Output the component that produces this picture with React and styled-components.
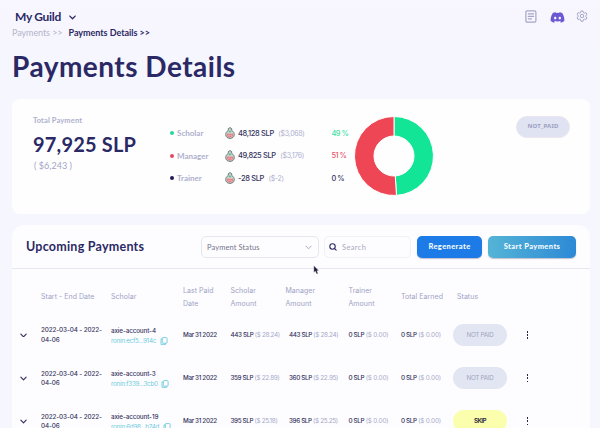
import React from 'react';
import styled, { createGlobalStyle } from 'styled-components';
import { FaDiscord } from 'react-icons/fa';

const GlobalStyle = createGlobalStyle`
  * { box-sizing: border-box; }
  body { margin: 0; background: #f6f6fe; overflow: hidden; }
`;

const navy = '#2b2965';
const ink = '#35335c';
const muted = '#aeb0cd';
const teal = '#6fcbdc';

const Page = styled.main`
  position: relative;
  height: 428px;
  overflow: hidden;
  padding: 0 10px 0 12px;
  background: linear-gradient(#f8f6fe, #f5f6fe 90px);
  color: ${navy};
  font-family: Lato, sans-serif;
  white-space: nowrap;
`;
const TopBar = styled.header`
  display: flex;
  justify-content: space-between;
  align-items: flex-start;
  height: 26px;
`;
const GuildPicker = styled.div`
  display: flex;
  align-items: center;
  gap: 8px;
  padding: 9px 0 0 3px;
  font-size: 12px;
  font-weight: 700;
  line-height: 16px;
  letter-spacing: -0.3px;
  svg { margin-top: 1px; }
`;
const Tools = styled.nav`
  display: flex;
  align-items: center;
  padding: 8px 2px 0 0;
  color: #a3a6c8;
  svg { display: block; }
  svg:nth-child(2) { margin: 2px 11px 0 13px; color: #6b59d3; }
  svg:nth-child(3) { margin-top: -2px; }
`;
const Breadcrumb = styled.div`
  display: flex;
  gap: 6px;
  height: 12px;
  font-size: 9px;
  line-height: 13px;
  letter-spacing: -0.07px;
  color: #b3b4cb;
  b { color: ${navy}; letter-spacing: -0.03px; }
`;
const Title = styled.h1`
  margin: 8px 0 0;
  height: 53px;
  font-size: 28px;
  line-height: 40px;
  letter-spacing: 0.48px;
  font-weight: 700;
`;
const SummaryCard = styled.section`
  display: flex;
  height: 115px;
  padding: 0 20px 0 21px;
  border-radius: 8px;
  background: #fefeff;
`;
const Total = styled.div`
  width: 136px;
  padding-top: 17px;
`;
const TotalLabel = styled.div`
  font-size: 7.5px;
  font-weight: 700;
  line-height: 10px;
  letter-spacing: 0.12px;
  color: ${muted};
`;
const TotalValue = styled.div`
  margin-top: 6px;
  font-size: 20px;
  font-weight: 700;
  line-height: 24px;
  letter-spacing: 0.19px;
`;
const TotalUsd = styled.div`
  margin-top: 4px;
  padding-left: 1px;
  font-size: 9px;
  line-height: 12px;
  letter-spacing: 0.05px;
  color: #a2a5c6;
`;
const Shares = styled.div`
  width: 185px;
  padding-top: 23px;
`;
const Share = styled.div`
  display: grid;
  grid-template-columns: 8px 47.5px 13.5px 93.5px auto;
  align-items: center;
  height: 22.5px;
`;
const Dot = styled.i`
  width: 4px;
  height: 4px;
  margin-left: 1px;
  border-radius: 50%;
  background: ${(p) => p.$color};
`;
const ShareName = styled.span`
  font-size: 8px;
  font-weight: 700;
  color: ${muted};
`;
const ShareAmount = styled.span`
  font: 500 7.5px Inter, sans-serif;
  letter-spacing: -0.36px;
  color: ${ink};
  small {
    margin-left: 2.8px;
    font-size: 7px;
    font-weight: 400;
    letter-spacing: -0.3px;
    color: ${muted};
  }
`;
const SharePercent = styled.span`
  font: 500 7.4px Inter, sans-serif;
  letter-spacing: -0.5px;
  color: ${(p) => p.$color};
`;
const Chart = styled.div`
  flex: 1;
  padding-top: 17px;
  svg { display: block; }
`;
const PaidBadge = styled.div`
  width: 54px;
  height: 22px;
  margin-top: 16.5px;
  border: 1px solid #eae5ef;
  border-radius: 11px;
  background: #e0e3f1;
  color: #9ca0c3;
  text-align: center;
  font: 700 6px/19px 'Noto Sans', sans-serif;
  letter-spacing: 0.16px;
`;
const PaymentsCard = styled.section`
  height: 230px;
  margin-top: 11px;
  border-radius: 12px 12px 0 0;
  background: #fdfdff;
`;
const Toolbar = styled.div`
  display: flex;
  height: 44px;
  padding: 11px 14px 0;
  border-bottom: 1px solid #e7e7f0;
`;
const Heading = styled.h2`
  width: 175px;
  margin: 0;
  font-size: 12.5px;
  line-height: 21px;
  letter-spacing: 0.24px;
`;
const Field = styled.div`
  display: flex;
  align-items: center;
  justify-content: space-between;
  width: 118px;
  height: 22px;
  padding: 0 6px 0 5px;
  border: 1px solid #e6e6ee;
  border-radius: 5px;
  color: #74748b;
  font-size: 7.5px;
  letter-spacing: 0.1px;
`;
const SearchField = styled(Field)`
  justify-content: flex-start;
  gap: 5px;
  width: 87px;
  margin-left: 5px;
  padding: 0 4px;
  border-color: #f0f0f5;
  color: #aaaabd;
  letter-spacing: 0.38px;
`;
const Button = styled.button`
  width: ${(p) => p.$width}px;
  height: 22px;
  margin: 0 0 0 6px;
  padding: 0 0 1px;
  border: 0;
  border-radius: 5px;
  background: ${(p) => p.$fill};
  box-shadow: 0 1px 1px #887fa080;
  color: #f5fbff;
  font: 900 7.5px/21px Lato, sans-serif;
  letter-spacing: 0.4px;
`;
const Row = styled.div`
  display: grid;
  grid-template-columns: 21px 70px 72px 47.5px 58.5px 59.5px 52.5px 52px 1fr;
  align-items: center;
  height: 43.1px;
  padding: 2px 0 0 8px;
  font: 500 6.3px/9.6px Inter, sans-serif;
  letter-spacing: -0.1px;
  color: ${ink};
  > svg { display: block; margin-top: -2px; }
`;
const HeadRow = styled(Row)`
  grid-template-columns: 21px 70px 72px 47.5px 55px 63px 52.5px 56px 1fr;
  height: 41.5px;
  padding-top: 16px;
  font: 400 7px/12.7px Inter, sans-serif;
  letter-spacing: 0.04px;
  color: #a0a2c4;
`;
const Rows = styled.div`
  padding-top: 3px;
`;
const Account = styled.div`
  margin-top: -1px;
  font-size: 6.3px;
  line-height: 10px;
  letter-spacing: -0.12px;
`;
const Wallet = styled.div`
  display: flex;
  align-items: center;
  gap: 3.5px;
  color: ${teal};
  font-weight: 400;
  letter-spacing: -0.27px;
`;
const PaidOn = styled.span`
  letter-spacing: -0.33px;
`;
const Slp = styled.span`
  letter-spacing: -0.36px;
  small {
    margin-left: ${(p) => (p.$zero ? 0.2 : -0.1)}px;
    font-size: 6.4px;
    font-weight: 400;
    letter-spacing: ${(p) => (p.$zero ? -0.18 : -0.33)}px;
    color: #a6a8c8;
  }
`;
const Status = styled.span`
  width: 54px;
  height: 22px;
  border-radius: 11px;
  background: ${(p) => (p.$skip ? '#fbffad' : '#e2e5f2')};
  color: ${(p) => (p.$skip ? '#2d2740' : '#a3a5bf')};
  font-size: 6.3px;
  font-weight: ${(p) => (p.$skip ? 600 : 400)};
  line-height: 22px;
  letter-spacing: ${(p) => (p.$skip ? -0.55 : -0.3)}px;
  text-align: center;
`;
const More = styled.span`
  display: grid;
  gap: 1.7px;
  i { width: 1.5px; height: 1.5px; background: #28264c; }
`;
const MoreCell = styled.div`
  display: flex;
  justify-content: space-between;
  align-items: center;
  width: 75px;
  margin-top: -2px;
`;
const Cursor = styled.svg`
  position: absolute;
  left: 313px;
  top: 265px;
`;

const Chevron = ({ size = 7, color = ink, weight = 1.2 }) => (
  <svg width={size} height={size * 0.7} viewBox="0 0 7 5" fill="none" stroke={color} strokeWidth={weight} strokeLinecap="round" strokeLinejoin="round">
    <path d="M.8 1.1 3.5 3.9 6.2 1.1" />
  </svg>
);
const NotesIcon = () => (
  <svg width="12" height="13" viewBox="0 0 12 13" fill="none" stroke="currentColor" strokeWidth="1.2" strokeLinecap="round">
    <rect x=".9" y=".9" width="10" height="11.2" rx="1.3" />
    <path d="M3.3 3.9h5.3M3.3 6.4h5.3M3.3 8.9h3.2" />
  </svg>
);
const GearIcon = () => (
  <svg width="12" height="12" viewBox="0 0 24 24" fill="none" stroke="currentColor" strokeWidth="2" strokeLinejoin="round">
    <path d="M9.9 2h4.2l.7 3.2 2 1.1 3.1-1 2.1 3.7-2.4 2.1v2.2l2.4 2.1-2.1 3.7-3.1-1-2 1.1-.7 3.2H9.9l-.7-3.2-2-1.1-3.1 1L2 15.4l2.4-2.1v-2.2L2 9l2.1-3.7 3.1 1 2-1.1z" />
    <circle cx="12" cy="12" r="3.5" />
  </svg>
);
const PotionIcon = () => (
  <svg width="10" height="12" viewBox="0 0 10 12">
    <path d="M3.3 1.6 5 .6l1.7 1v1.8C8.5 4.5 9.3 6 9.3 7.6c0 2.3-1.9 3.8-4.3 3.8S.7 9.9.7 7.6c0-1.6.8-3.1 2.6-4.2z" fill="#c8d6cd" stroke="#5e746d" strokeWidth=".9" />
    <path d="M1.8 6.8c1.8-1 4.4.8 6.400-.4.4 2.400-1 4.200-3.200 4.200S1.600 9.200 1.800 6.800z" fill="#e9808a" />
    <path d="M3.4 4.300 5 3.200l1.500 1.200L5 5.800z" fill="#6fb99b" />
    <path d="M3.500 8.300h1M5.800 8.900h1" stroke="#fbe4e6" strokeWidth=".8" />
  </svg>
);
const SearchIcon = () => (
  <svg width="8" height="8" viewBox="0 0 8 8" fill="none" stroke={navy} strokeWidth="1.1" strokeLinecap="round">
    <circle cx="3.5" cy="3.5" r="2.7" />
    <path d="m5.600 5.600 1.600 1.600" />
  </svg>
);
const CopyIcon = () => (
  <svg width="8" height="8" viewBox="0 0 8 8" fill="none" stroke={teal} strokeWidth=".9" strokeLinejoin="round">
    <rect x="2.3" y=".6" width="4.8" height="5.6" rx=".7" />
    <path d="M2.300 1.900H1v5.500h4.600V6.200" />
  </svg>
);
const Donut = () => (
  <svg width="80" height="80" viewBox="-40 -40 80 80" stroke="#fff" strokeWidth="1">
    <path d="M0-39.500A39.500 39.500 0 0 1 2.480 39.420L1.260 19.960A20 20 0 0 0 0-20z" fill="#13e597" />
    <path d="M2.480 39.420A39.500 39.500 0 1 1 0-39.500V-20A20 20 0 1 0 1.260 19.960z" fill="#ee4654" />
  </svg>
);

const shares = [
  { name: 'Scholar', slp: '48,128 SLP', usd: '($3,068)', pct: '49 %', dot: '#28d99a', color: '#3fdfa4' },
  { name: 'Manager', slp: '49,825 SLP', usd: '($3,176)', pct: '51 %', dot: '#e54860', color: '#ec5264' },
  { name: 'Trainer', slp: '-28 SLP', usd: '($-2)', pct: '0 %', dot: '#201d51', color: ink },
];
const columns = [
  ['Start - End Date'], ['Scholar'], ['Last Paid', 'Date'], ['Scholar', 'Amount'],
  ['Manager', 'Amount'], ['Trainer', 'Amount'], ['Total Earned'], ['Status'],
];
const payments = [
  { account: 'axie-account-4', wallet: 'ronin:ecf5...914c', scholar: ['443', '28.24'], manager: ['443', '28.24'] },
  { account: 'axie-account-3', wallet: 'ronin:f339...3cb0', scholar: ['359', '22.89'], manager: ['360', '22.95'] },
  { account: 'axie-account-19', wallet: 'ronin:6d98...b74d', scholar: ['395', '25.18'], manager: ['396', '25.25'], skip: true },
];

const Amount = ({ slp, usd }) => (
  <Slp $zero={slp === '0'}>{slp} SLP <small>($ {usd})</small></Slp>
);

export default function App() {
  return (
    <Page>
      <GlobalStyle />
      <TopBar>
        <GuildPicker>My Guild <Chevron size={7} color={navy} weight={1.3} /></GuildPicker>
        <Tools>
          <NotesIcon />
          <FaDiscord size={15} />
          <GearIcon />
        </Tools>
      </TopBar>
      <Breadcrumb><span>Payments &gt;&gt;</span><b>Payments Details &gt;&gt;</b></Breadcrumb>
      <Title>Payments Details</Title>

      <SummaryCard>
        <Total>
          <TotalLabel>Total Payment</TotalLabel>
          <TotalValue>97,925 SLP</TotalValue>
          <TotalUsd>( $6,243 )</TotalUsd>
        </Total>
        <Shares>
          {shares.map((s) => (
            <Share key={s.name}>
              <Dot $color={s.dot} />
              <ShareName>{s.name}</ShareName>
              <PotionIcon />
              <ShareAmount>{s.slp} <small>{s.usd}</small></ShareAmount>
              <SharePercent $color={s.color}>{s.pct}</SharePercent>
            </Share>
          ))}
        </Shares>
        <Chart><Donut /></Chart>
        <PaidBadge>NOT_PAID</PaidBadge>
      </SummaryCard>

      <PaymentsCard>
        <Toolbar>
          <Heading>Upcoming Payments</Heading>
          <Field>Payment Status <Chevron size={7} color="#aaaabd" weight={1} /></Field>
          <SearchField><SearchIcon /> Search</SearchField>
          <Button $width={65} $fill="#1c7be6">Regenerate</Button>
          <Button $width={88} $fill="linear-gradient(90deg, #54b4d6, #2d89d6)">Start Payments</Button>
        </Toolbar>
        <HeadRow>
          <span />
          {columns.map((lines, i) => (
            <div key={i}>{lines.map((l) => <div key={l}>{l}</div>)}</div>
          ))}
        </HeadRow>
        <Rows>
          {payments.map((p) => (
            <Row key={p.account}>
              <Chevron />
              <div>2022-03-04 - 2022-<br />04-06</div>
              <Account>
                {p.account}
                <Wallet>{p.wallet} <CopyIcon /></Wallet>
              </Account>
              <PaidOn>Mar 31 2022</PaidOn>
              <Amount slp={p.scholar[0]} usd={p.scholar[1]} />
              <Amount slp={p.manager[0]} usd={p.manager[1]} />
              <Amount slp="0" usd="0.00" />
              <Amount slp="0" usd="0.00" />
              <MoreCell>
                <Status $skip={p.skip}>{p.skip ? 'SKIP' : 'NOT PAID'}</Status>
                <More><i /><i /><i /></More>
              </MoreCell>
            </Row>
          ))}
        </Rows>
      </PaymentsCard>
      <Cursor width="7" height="10" viewBox="0 0 7 10">
        <path d="M.8.5v7l1.600-1.300 1.200 2.900 1.500-.6-1.200-2.800h2z" fill="#1c1a35" stroke="#fff" strokeWidth=".4" />
      </Cursor>
    </Page>
  );
}
